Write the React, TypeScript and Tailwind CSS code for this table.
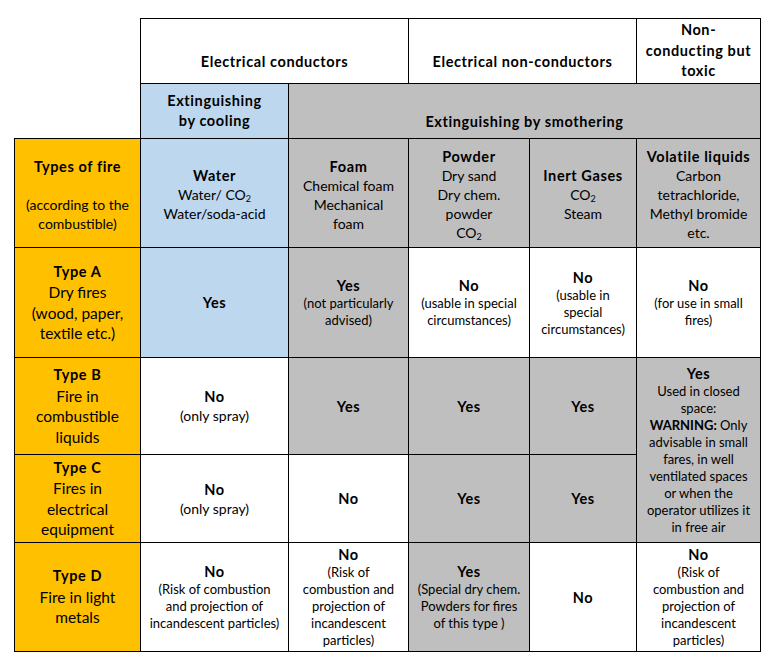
import React from "react";

const B = "border border-black";
const big = "text-[14px] leading-[19px]";
const boldCls = "text-[14.5px] leading-[19px] font-bold tracking-[0.6px]";
const sm = "text-[13px] leading-[17px]";

function Cell({
  bg,
  children,
  rowSpan,
  colSpan,
  extra = "",
}: {
  bg: string;
  children?: React.ReactNode;
  rowSpan?: number;
  colSpan?: number;
  extra?: string;
}) {
  return (
    <td rowSpan={rowSpan} colSpan={colSpan} className={`${B} ${bg} text-center align-middle p-0 ${extra}`}>
      {children}
    </td>
  );
}

const Bold = ({ children, cls = "" }: { children: React.ReactNode; cls?: string }) => (
  <div className={`${boldCls} ${cls}`}>{children}</div>
);
const Big = ({ children }: { children: React.ReactNode }) => <div className={big}>{children}</div>;
const Small = ({ children }: { children: React.ReactNode }) => <div className={sm}>{children}</div>;

const CO2 = () => (
  <>
    CO<sub className="text-[9px] align-baseline relative top-[2px]">2</sub>
  </>
);

const W = "bg-white";
const G = "bg-[#bfbfbf]";
const BL = "bg-[#bdd7ee]";
const O = "bg-[#ffc000]";

const Fire = ({ type, lines }: { type: string; lines: string[] }) => (
  <div className="text-[15.5px] leading-[20.5px]">
    <div className="font-bold tracking-[0.6px] text-[14.5px]">{type}</div>
    {lines.map((l) => (
      <div key={l}>{l}</div>
    ))}
  </div>
);

export default function App() {
  return (
    <div
      className="w-[768px] h-[665px] bg-white text-black pt-[18px] pl-[14px]"
      style={{ fontFamily: "Lato, 'Open Sans', sans-serif" }}
    >
      <table className="border-collapse table-fixed w-[646px]">
        <colgroup>
          <col className="w-[126px]" />
          <col className="w-[148px]" />
          <col className="w-[120px]" />
          <col className="w-[121px]" />
          <col className="w-[107px]" />
          <col className="w-[124px]" />
        </colgroup>
        <tbody>
          <tr className="h-[65px]">
            <td rowSpan={2} className="p-0 border-0"></td>
            <Cell bg={W} colSpan={2} extra="pt-[20px]">
              <Bold>Electrical conductors</Bold>
            </Cell>
            <Cell bg={W} colSpan={2} extra="pt-[20px]">
              <Bold>Electrical non-conductors</Bold>
            </Cell>
            <Cell bg={W}>
              <Bold cls="leading-[20.5px]">
                Non-
                <br />
                conducting but
                <br />
                toxic
              </Bold>
            </Cell>
          </tr>
          <tr className="h-[55px]">
            <Cell bg={BL}>
              <Bold cls="leading-[20px]">
                Extinguishing
                <br />
                by cooling
              </Bold>
            </Cell>
            <Cell bg={G} colSpan={4} extra="pt-[20px]">
              <Bold>Extinguishing by smothering</Bold>
            </Cell>
          </tr>
          <tr className="h-[109px]">
            <Cell bg={O} extra="pt-[3px]">
              <Bold>Types of fire</Bold>
              <Big>&nbsp;</Big>
              <Big>(according to the</Big>
              <Big>combustible)</Big>
            </Cell>
            <Cell bg={BL} extra="pt-[3px]">
              <Bold>Water</Bold>
              <Big>
                Water/ <CO2 />
              </Big>
              <Big>Water/soda-acid</Big>
            </Cell>
            <Cell bg={G} extra="pt-[3px]">
              <Bold>Foam</Bold>
              <Big>Chemical foam</Big>
              <Big>Mechanical</Big>
              <Big>foam</Big>
            </Cell>
            <Cell bg={G} extra="pt-[3px]">
              <Bold>Powder</Bold>
              <Big>Dry sand</Big>
              <Big>Dry chem.</Big>
              <Big>powder</Big>
              <Big>
                <CO2 />
              </Big>
            </Cell>
            <Cell bg={G} extra="pt-[3px]">
              <Bold>Inert Gases</Bold>
              <Big>
                <CO2 />
              </Big>
              <Big>Steam</Big>
            </Cell>
            <Cell bg={G} extra="pt-[3px]">
              <Bold cls="tracking-[0.4px]">Volatile liquids</Bold>
              <Big>Carbon</Big>
              <Big>tetrachloride,</Big>
              <Big>Methyl bromide</Big>
              <Big>etc.</Big>
            </Cell>
          </tr>
          <tr className="h-[110px]">
            <Cell bg={O}>
              <Fire type="Type A" lines={["Dry fires", "(wood, paper,", "textile etc.)"]} />
            </Cell>
            <Cell bg={BL}>
              <Bold>Yes</Bold>
            </Cell>
            <Cell bg={G}>
              <Bold>Yes</Bold>
              <Small>
                (not particularly
                <br />
                advised)
              </Small>
            </Cell>
            <Cell bg={W}>
              <Bold>No</Bold>
              <Small>
                (usable in special
                <br />
                circumstances)
              </Small>
            </Cell>
            <Cell bg={W}>
              <Bold>No</Bold>
              <Small>
                (usable in
                <br />
                special
                <br />
                circumstances)
              </Small>
            </Cell>
            <Cell bg={W}>
              <Bold>No</Bold>
              <Small>
                (for use in small
                <br />
                fires)
              </Small>
            </Cell>
          </tr>
          <tr className="h-[97px]">
            <Cell bg={O}>
              <Fire type="Type B" lines={["Fire in", "combustible", "liquids"]} />
            </Cell>
            <Cell bg={W}>
              <Bold>No</Bold>
              <Big>(only spray)</Big>
            </Cell>
            <Cell bg={G}>
              <Bold>Yes</Bold>
            </Cell>
            <Cell bg={G}>
              <Bold>Yes</Bold>
            </Cell>
            <Cell bg={G}>
              <Bold>Yes</Bold>
            </Cell>
            <Cell bg={G} rowSpan={2}>
              <Bold>Yes</Bold>
              <Small>
                Used in closed
                <br />
                space:
                <br />
                <span className="font-bold">WARNING:</span> Only
                <br />
                advisable in small
                <br />
                fares, in well
                <br />
                ventilated spaces
                <br />
                or when the
                <br />
                operator utilizes it
                <br />
                in free air
              </Small>
            </Cell>
          </tr>
          <tr className="h-[88px]">
            <Cell bg={O}>
              <Fire type="Type C" lines={["Fires in", "electrical", "equipment"]} />
            </Cell>
            <Cell bg={W}>
              <Bold>No</Bold>
              <Big>(only spray)</Big>
            </Cell>
            <Cell bg={W}>
              <Bold>No</Bold>
            </Cell>
            <Cell bg={G}>
              <Bold>Yes</Bold>
            </Cell>
            <Cell bg={G}>
              <Bold>Yes</Bold>
            </Cell>
          </tr>
          <tr className="h-[109px]">
            <Cell bg={O}>
              <Fire type="Type D" lines={["Fire in light", "metals"]} />
            </Cell>
            <Cell bg={W}>
              <Bold>No</Bold>
              <Small>
                (Risk of combustion
                <br />
                and projection of
                <br />
                incandescent particles)
              </Small>
            </Cell>
            <Cell bg={W}>
              <Bold>No</Bold>
              <Small>
                (Risk of
                <br />
                combustion and
                <br />
                projection of
                <br />
                incandescent
                <br />
                particles)
              </Small>
            </Cell>
            <Cell bg={G}>
              <Bold>Yes</Bold>
              <Small>
                (Special dry chem.
                <br />
                Powders for fires
                <br />
                of this type )
              </Small>
            </Cell>
            <Cell bg={W}>
              <Bold>No</Bold>
            </Cell>
            <Cell bg={W}>
              <Bold>No</Bold>
              <Small>
                (Risk of
                <br />
                combustion and
                <br />
                projection of
                <br />
                incandescent
                <br />
                particles)
              </Small>
            </Cell>
          </tr>
        </tbody>
      </table>
    </div>
  );
}
